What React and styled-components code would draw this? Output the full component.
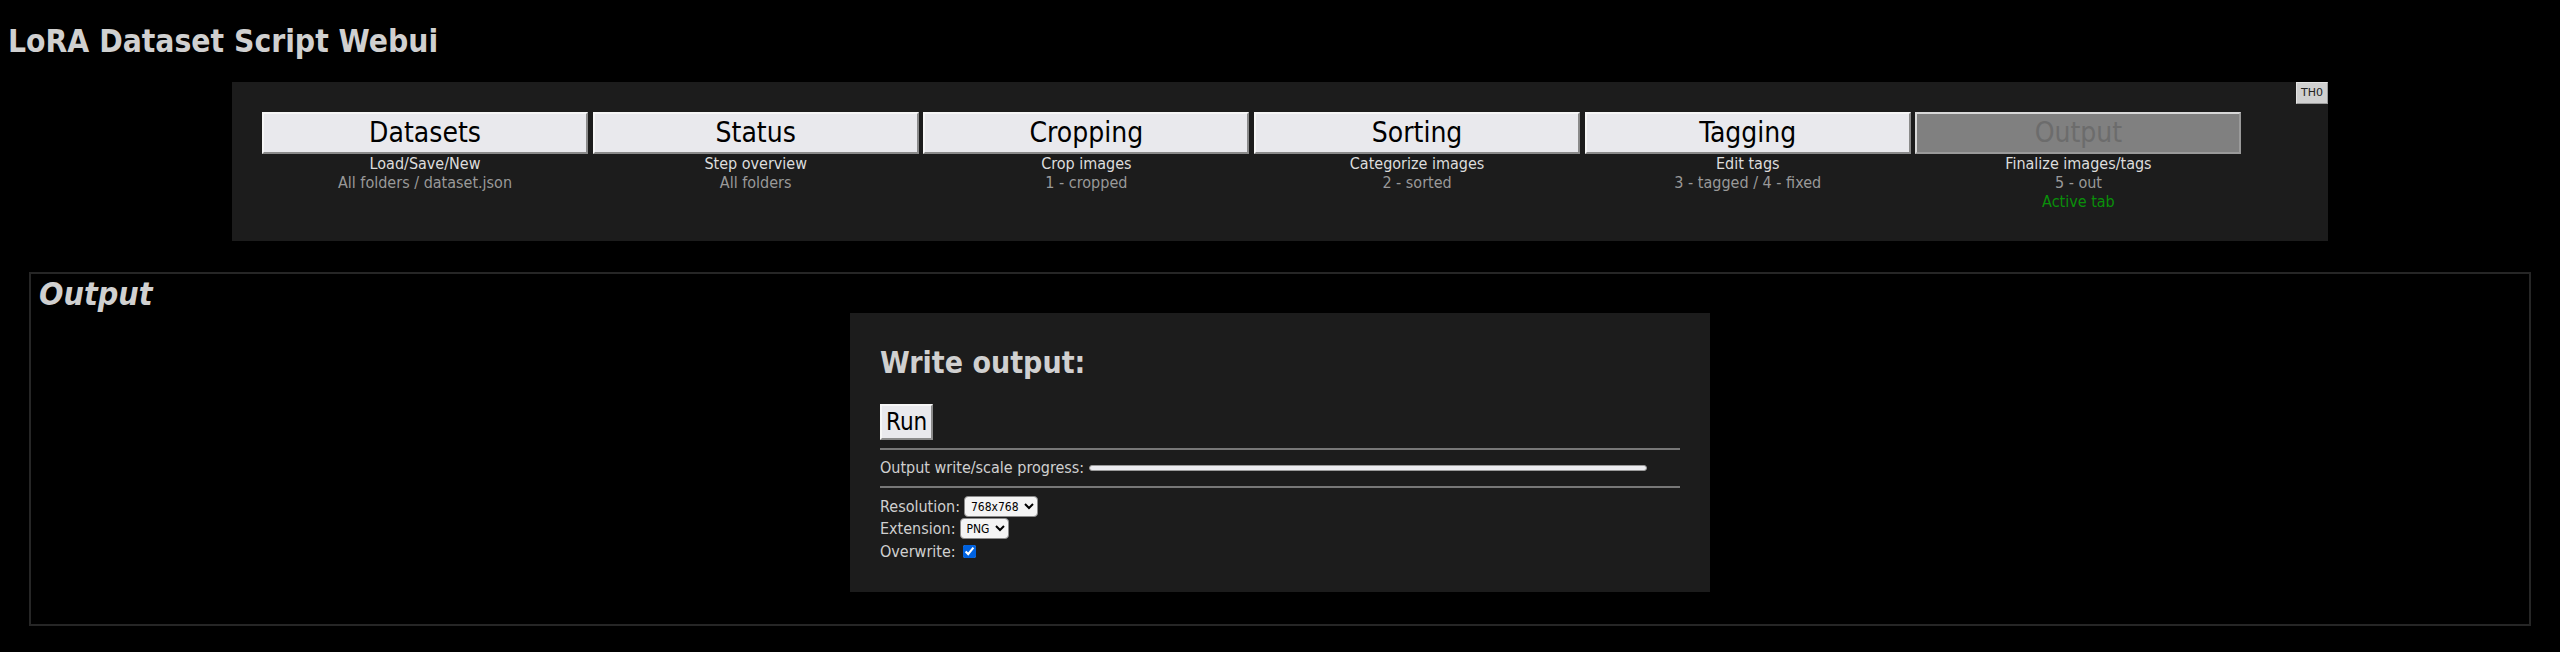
import React from 'react'
import styled, { createGlobalStyle } from 'styled-components'

const GlobalStyle = createGlobalStyle`
  body {
    margin: 0;
    background-color: #000;
    color: #d0d0d0;
    font-family: "DejaVu Sans Condensed", "DejaVu Sans", sans-serif;
    font-size: 16px;
  }
`

const Page = styled.div`
  padding: 8px 8px 0 8px;
`

const Title = styled.h1`
  margin: 15px 0 22.5px 0;
  font-size: 31.5px;
  font-weight: bold;
  color: #d0d0d0;
`

const NavPanel = styled.div`
  width: 2096px;
  margin: 0 auto;
  box-sizing: border-box;
  padding-left: 30px;
  background-color: #1c1c1c;
  display: flex;
  align-items: flex-start;
`

const TabRow = styled.div`
  display: flex;
  gap: 4.7px;
  padding: 30px 0;
`

const TabColumn = styled.div`
  width: 326px;
  display: flex;
  flex-direction: column;
  text-align: center;
`

const TabButton = styled.button`
  height: 42px;
  padding: 0;
  font-family: inherit;
  font-size: 28px;
  color: ${(p) => (p.$active ? '#6c6c6c' : '#000')};
  background-color: ${(p) => (p.$active ? '#808080' : '#e9e9ed')};
  border: 2px solid;
  border-color: ${(p) =>
    p.$active ? '#d8d8d8 #9a9a9a #9a9a9a #d8d8d8' : '#f6f6f6 #8a8a8a #8a8a8a #f6f6f6'};
`

const TabLine = styled.div`
  line-height: normal;
  color: ${(p) => (p.$tone === 'dim' ? '#999' : p.$tone === 'ok' ? '#0a8f0a' : '#ddd')};
`

const ThemeButton = styled.button`
  margin-left: auto;
  width: 32px;
  height: 22px;
  padding: 0;
  font-family: "DejaVu Sans", sans-serif;
  font-size: 11px;
  color: #222;
  background-color: #d0d0d0;
  border: 1px solid;
  border-color: #e4e4e4 #9a9a9a #9a9a9a #e4e4e4;
`

const Section = styled.div`
  margin: 31px 21px 0 21px;
  padding: 1px 8px 32px 8px;
  border: 2px solid #262626;
`

const SectionTitle = styled.h2`
  margin: 0;
  font-size: 32px;
  font-weight: bold;
  font-style: italic;
  color: #d0d0d0;
`

const Card = styled.div`
  width: 860px;
  margin: 0 auto;
  box-sizing: border-box;
  padding: 32px 30px 30px 30px;
  background-color: #1c1c1c;
`

const CardTitle = styled.h3`
  margin: 0 0 24px 0;
  font-size: 30px;
  font-weight: bold;
  color: #d0d0d0;
`

const RunButton = styled.button`
  display: block;
  padding: 2px 4px;
  font-family: inherit;
  font-size: 24px;
  color: #000;
  background-color: #e9e9ed;
  border: 2px solid;
  border-color: #f6f6f6 #8a8a8a #8a8a8a #f6f6f6;
`

const Divider = styled.hr`
  margin: 8px 0;
  height: 0;
  border: none;
  border-top: 2px solid #777;
`

const ProgressRow = styled.div`
  display: flex;
  align-items: center;
  gap: 5px;
  height: 20px;
`

const ProgressTrack = styled.div`
  width: 556px;
  height: 4px;
  border: 1px solid #9a9a9a;
  border-radius: 4px;
  background-color: #ececf0;
`

const FieldRow = styled.div`
  display: flex;
  align-items: center;
  gap: 4px;
  height: 22.3px;
`

const Select = styled.select`
  height: 21px;
  padding: 0 2px;
  font-family: inherit;
  font-size: 12px;
  color: #000;
  background-color: #f4f4f4;
  border: 1px solid #8a8a8a;
  border-radius: 4px;
`

const Check = styled.input`
  margin: 0 0 0 3px;
  width: 13px;
  height: 13px;
  accent-color: #0062e0;
`

const tabs = [
  { name: 'Datasets', desc: 'Load/Save/New', dir: 'All folders / dataset.json' },
  { name: 'Status', desc: 'Step overview', dir: 'All folders' },
  { name: 'Cropping', desc: 'Crop images', dir: '1 - cropped' },
  { name: 'Sorting', desc: 'Categorize images', dir: '2 - sorted' },
  { name: 'Tagging', desc: 'Edit tags', dir: '3 - tagged / 4 - fixed' },
  { name: 'Output', desc: 'Finalize images/tags', dir: '5 - out', active: true },
]

export default function App() {
  return (
    <Page>
      <GlobalStyle />
      <Title>LoRA Dataset Script Webui</Title>
      <NavPanel>
        <TabRow>
          {tabs.map((t) => (
            <TabColumn key={t.name}>
              <TabButton $active={t.active}>{t.name}</TabButton>
              <TabLine>{t.desc}</TabLine>
              <TabLine $tone="dim">{t.dir}</TabLine>
              {t.active && <TabLine $tone="ok">Active tab</TabLine>}
            </TabColumn>
          ))}
        </TabRow>
        <ThemeButton>TH0</ThemeButton>
      </NavPanel>
      <Section>
        <SectionTitle>Output</SectionTitle>
        <Card>
          <CardTitle>Write output:</CardTitle>
          <RunButton>Run</RunButton>
          <Divider />
          <ProgressRow>
            <span>Output write/scale progress:</span>
            <ProgressTrack />
          </ProgressRow>
          <Divider />
          <FieldRow>
            <span>Resolution:</span>
            <Select defaultValue="768">
              <option value="768">768x768</option>
              <option value="512">512x512</option>
            </Select>
          </FieldRow>
          <FieldRow>
            <span>Extension:</span>
            <Select defaultValue="png">
              <option value="png">PNG</option>
              <option value="jpg">JPG</option>
            </Select>
          </FieldRow>
          <FieldRow>
            <span>Overwrite:</span>
            <Check type="checkbox" defaultChecked />
          </FieldRow>
        </Card>
      </Section>
    </Page>
  )
}
